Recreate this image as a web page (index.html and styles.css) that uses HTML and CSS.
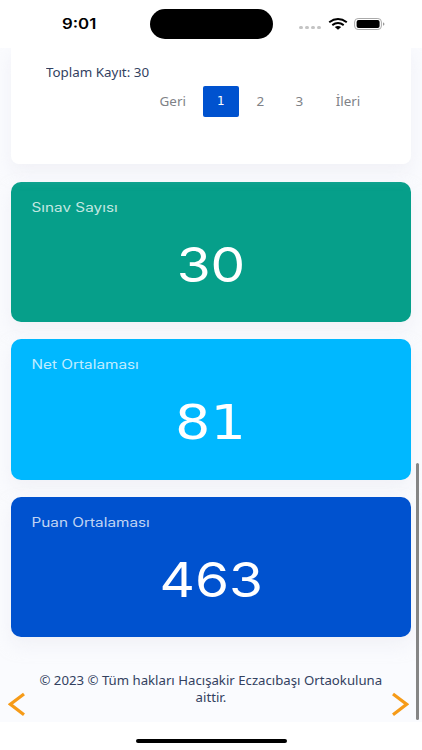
FILE: index.html
```
<!DOCTYPE html>
<html lang="tr">
<head>
<meta charset="utf-8">
<meta name="viewport" content="width=device-width, initial-scale=1">
<title>Sınav Sonuçları</title>
<link rel="stylesheet" href="styles.css">
</head>
<body>
<header class="status">
  <span class="time">9:01</span>
  <span class="island"></span>
  <span class="signal"><i></i><i></i><i></i><i></i></span>
  <svg class="wifi" width="20" height="13" viewBox="0 0 20 13">
    <path d="M1.2 4.3Q10-2.2 18.8 4.3M4.3 7.1Q10 2.9 15.7 7.1" fill="none" stroke="#000" stroke-width="2"/>
    <path d="M6.8 9Q10 6.8 13.2 9L10 11.7Z"/>
  </svg>
  <svg class="battery" width="31" height="12" viewBox="0 0 31 12">
    <rect x=".6" y=".5" width="26.8" height="11" rx="3.5" fill="#fff" stroke="#aaa"/>
    <rect x="2.6" y="2" width="23" height="8" rx="2"/>
    <path d="M29 4.2Q32 6 29 7.8Z" fill="#999"/>
  </svg>
</header>
<main class="page">
  <section class="records">
    <p class="total"><span>Toplam Kayıt: 30</span></p>
    <nav class="pager">
      <a class="prev"><span>Geri</span></a>
      <a class="num active"><span>1</span></a>
      <a class="num"><span>2</span></a>
      <a class="num"><span>3</span></a>
      <a class="next"><span>İleri</span></a>
    </nav>
  </section>
  <section class="card green"><h2><span>Sınav Sayısı</span></h2><p><span>30</span></p></section>
  <section class="card sky"><h2><span>Net Ortalaması</span></h2><p><span>81</span></p></section>
  <section class="card blue"><h2><span>Puan Ortalaması</span></h2><p><span>463</span></p></section>
  <footer><span>© 2023 © Tüm hakları Hacışakir Eczacıbaşı Ortaokuluna</span><span>aittir.</span></footer>
  <svg class="arrow left" width="18" height="25" viewBox="0 0 18 25"><path d="M16 2L2.4 12.3L16 22.8"/></svg>
  <svg class="arrow right" width="18" height="25" viewBox="0 0 18 25"><path d="M2 2L15.6 12.3L2 22.8"/></svg>
  <div class="scrollbar"></div>
</main>
<div class="home"></div>
</body>
</html>
```
FILE: styles.css
```
* { box-sizing: border-box; }
body {
  position: relative;
  margin: 0;
  height: 750px;
  overflow: hidden;
  background: #fff;
  font-family: "Noto Sans", sans-serif;
  color: #33415f;
}
h2, p { margin: 0; font-weight: 400; }
span { display: inline-block; white-space: nowrap; }
.status { height: 48px; display: flex; align-items: center; padding-left: 62px; }
.time {
  width: 87.5px;
  font: 600 14.5px/20px Inter, sans-serif;
  color: #000;
  transform: scaleX(1.16);
  transform-origin: left;
}
.island { width: 123px; height: 30px; border-radius: 15px; background: #000; }
.signal { display: flex; gap: 2px; margin: 7px 0 0 26.5px; }
.signal i { width: 4px; height: 3px; border-radius: 1.5px; background: #c4c4c4; }
.wifi { margin-left: 7px; }
.battery { margin-left: 6px; }
.page {
  position: relative;
  height: 674px;
  padding: 0 11px;
  background: #fafbfe;
}
.records {
  height: 116px;
  padding: 16px 0 0 35px;
  background: #fff;
  border-radius: 0 0 8px 8px;
  box-shadow: 0 8px 16px #e9e9f280;
  clip-path: inset(0 -20px -40px);
}
.total { height: 22px; font-size: 12px; line-height: 18px; }
.total span { transform: scaleX(1.115); transform-origin: left; }
.pager {
  display: flex;
  margin-left: 101.4px;
  font-size: 12px;
  line-height: 31px;
  color: #808287;
  text-align: center;
}
.pager a { flex: none; }
.pager span { transform: scaleX(1.12); }
.prev { width: 50px; }
.num { width: 39px; }
.num.active {
  width: 36px;
  margin: 0 2.5px 0 5.5px;
  border-radius: 2px;
  background: #0052cf;
  color: #fff;
  font-family: "DejaVu Sans", sans-serif;
  font-size: 12px;
}
.pager .active span { transform: none; }
.next { width: 57px; }
.card {
  height: 140.6px;
  margin-top: 17px;
  padding: 14px 20.5px 0;
  border-radius: 10px;
  box-shadow: 0 8px 16px #e9e9f280;
}
.records + .card { margin-top: 17.7px; }
.green { background: #069f8a; }
.sky { background: #00b8ff; }
.blue { background: #0052cf; }
.card h2 {
  height: 22px;
  font: 400 12.5px/23px Inter, sans-serif;
  color: #ffffffc4;
}
.card h2 span { transform: translateX(-.5px) scaleX(1.225); transform-origin: left; }
.card p {
  font: 400 48px/94px Inter, sans-serif;
  color: #fff;
  text-align: center;
}
.card p span { transform: scaleX(1.145); }
.card.sky p { font: 400 48px/94px "DejaVu Sans", sans-serif; }
.card.sky p span { transform: scaleX(1.16); }
footer {
  display: flex;
  flex-direction: column;
  align-items: center;
  padding-top: 34.5px;
  font-size: 12px;
  line-height: 17px;
}
footer span { transform: scaleX(1.1); }
.arrow {
  position: absolute;
  top: 644px;
  fill: none;
  stroke: #f69b18;
  stroke-width: 3.2;
}
.left { left: 8px; }
.right { right: 13px; }
.scrollbar {
  position: absolute;
  top: 415px;
  right: 3px;
  width: 3px;
  height: 257px;
  border-radius: 2px;
  background: #858585;
}
.home {
  width: 151px;
  height: 4px;
  margin: 17px 0 0 135.5px;
  border-radius: 2px;
  background: #000;
}
```
